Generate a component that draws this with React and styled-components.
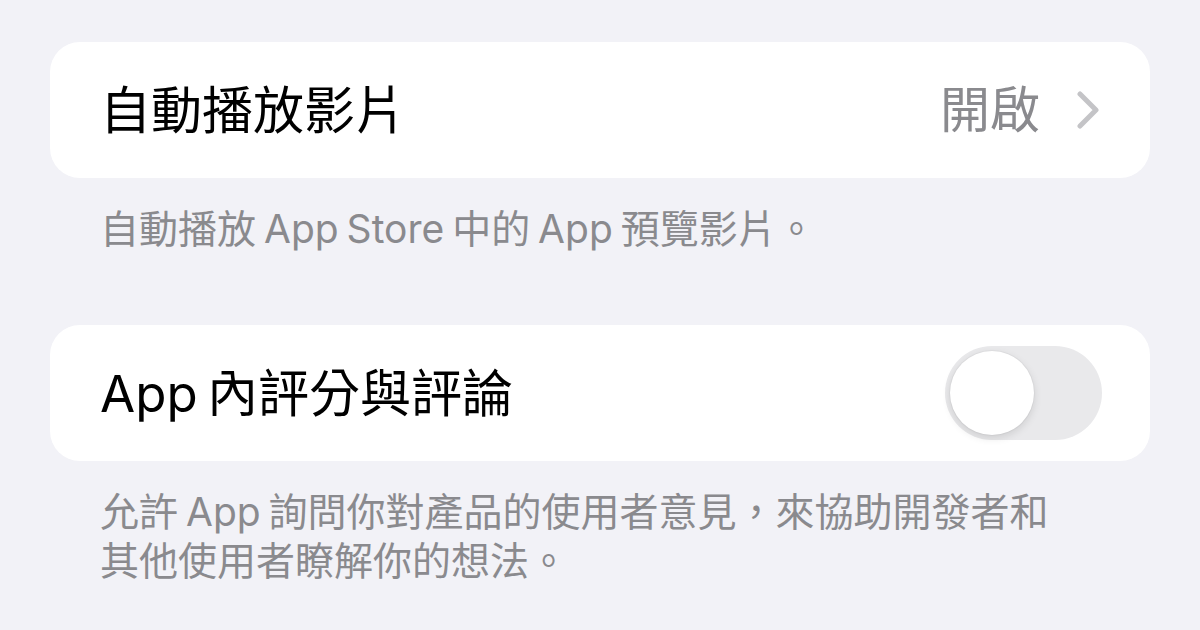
import styled, { createGlobalStyle } from 'styled-components';

const GlobalStyle = createGlobalStyle`
  html, body {
    margin: 0;
    padding: 0;
    background: #f2f2f7;
  }
  body {
    font-family: Inter, "Noto Sans CJK TC", "Noto Sans", sans-serif;
    -webkit-font-smoothing: antialiased;
  }
`;

function Chevron() {
  return (
    <svg width="24" height="38" viewBox="0 0 24 38" fill="none">
      <polyline
        points="4,3 20,19 4,35"
        stroke="#c4c4c7"
        strokeWidth="5"
        strokeLinecap="round"
        strokeLinejoin="round"
      />
    </svg>
  );
}

function App() {
  return (
    <Page>
      <GlobalStyle />
      <Group>
        <Card>
          <Label>自動播放影片</Label>
          <Detail>
            <Value>開啟</Value>
            <Chevron />
          </Detail>
        </Card>
        <Footer>自動播放 App Store 中的 App 預覽影片。</Footer>
      </Group>

      <Group>
        <Card>
          <Label>App 內評分與評論</Label>
          <Switch $on={false}>
            <Knob />
          </Switch>
        </Card>
        <Footer>
          允許 App 詢問你對產品的使用者意見，來協助開發者和
          <br />
          其他使用者瞭解你的想法。
        </Footer>
      </Group>
    </Page>
  );
}

export default App;

const Page = styled.div`
  width: 1200px;
  height: 630px;
  box-sizing: border-box;
  padding: 42px 50px 0;
  display: flex;
  flex-direction: column;
  gap: 72px;
  overflow: hidden;
`;

const Group = styled.section`
  display: flex;
  flex-direction: column;
`;

const Card = styled.div`
  height: 136px;
  box-sizing: border-box;
  padding: 0 48px 0 50px;
  background: #ffffff;
  border-radius: 30px;
  display: flex;
  align-items: center;
  justify-content: space-between;
`;

const Label = styled.span`
  font-size: 51px;
  color: #000000;
  word-spacing: -5px;
  line-height: 1;
`;

const Detail = styled.div`
  display: flex;
  align-items: center;
  gap: 36px;
  margin-right: 2px;
`;

const Value = styled.span`
  font-size: 50px;
  color: #8a8a8e;
  line-height: 1;
`;

const Footer = styled.p`
  margin: 0;
  padding: 26px 50px 0;
  font-size: 39px;
  line-height: 49px;
  word-spacing: -3px;
  color: #8a8a8e;
`;

const Switch = styled.div`
  width: 157px;
  height: 94px;
  border-radius: 47px;
  background: ${p => (p.$on ? '#34c759' : '#e9e9eb')};
  padding: 5px;
  box-sizing: border-box;
  display: flex;
  justify-content: ${p => (p.$on ? 'flex-end' : 'flex-start')};
`;

const Knob = styled.div`
  width: 84px;
  height: 84px;
  border-radius: 50%;
  background: #ffffff;
  box-shadow: 0 3px 8px rgba(0, 0, 0, 0.12), 0 0 0 1px rgba(0, 0, 0, 0.03);
`;
